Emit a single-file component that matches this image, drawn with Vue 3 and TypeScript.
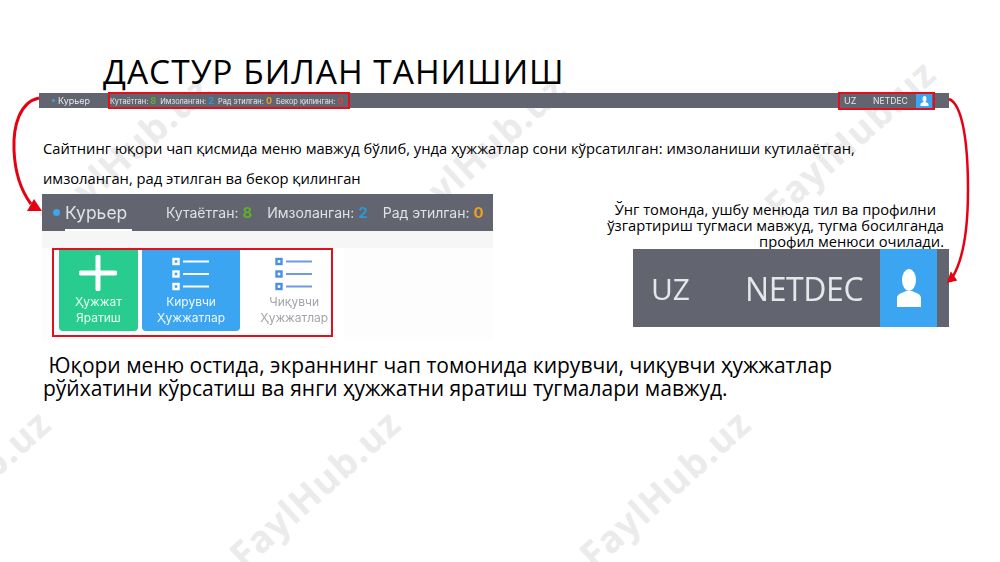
<script setup lang="ts">
interface Mark { x: number; y: number }
const marks: Mark[] = [
  { x: 45, y: 205 }, { x: 400, y: 205 }, { x: 770, y: 190 },
  { x: -115, y: 540 }, { x: 235, y: 540 }, { x: 585, y: 540 },
]
const stats = [
  { label: 'Кутаётган:', value: '8', cls: 'green' },
  { label: 'Имзоланган:', value: '2', cls: 'blue' },
  { label: 'Рад этилган:', value: '0', cls: 'orange' },
  { label: 'Бекор қилинган:', value: '0', cls: 'red' },
]
const bigStats = stats.slice(0, 3)
const rows = [0, 1, 2]
const noteLines = [
  { text: 'Ўнг томонда, ушбу менюда тил ва профилни', pad: true },
  { text: 'ўзгартириш тугмаси мавжуд, тугма босилганда', pad: false },
  { text: 'профил менюси очилади.', pad: false },
]
const outroFirst = '\u00a0Юқори меню остида, экраннинг чап томонида кирувчи, чиқувчи ҳужжатлар'
const outroSecond = 'рўйхатини кўрсатиш ва янги ҳужжатни яратиш тугмалари мавжуд.'
</script>

<template>
  <div class="slide">
    <div
      v-for="(m, i) in marks"
      :key="i"
      class="mark"
      :style="{ left: m.x + 'px', top: m.y + 'px' }"
    >FaylHub.uz</div>

    <h1 class="title">ДАСТУР БИЛАН ТАНИШИШ</h1>

    <div class="topbar">
      <span class="brand"><i class="dot"></i>Курьер</span>
      <div class="stats">
        <span v-for="s in stats" :key="s.label" class="stat">{{ s.label }} <b :class="s.cls">{{ s.value }}</b></span>
      </div>
      <div class="side">
        <span class="uz">UZ</span>
        <span class="net">NETDEC</span>
        <span class="avatar">
          <svg width="9" height="10" viewBox="0 0 18 20"><ellipse cx="9" cy="6" rx="4" ry="6" fill="#fff"/><path d="M1 20v-3c0-3 3-4 6-5h4c3 1 6 2 6 5v3z" fill="#fff"/></svg>
        </span>
      </div>
    </div>

    <p class="intro">Сайтнинг юқори чап қисмида меню мавжуд бўлиб, унда ҳужжатлар сони кўрсатилган: имзоланиши кутилаётган,<br>имзоланган, рад этилган ва бекор қилинган</p>

    <div class="row">
      <div class="shot">
        <div class="shot-bar">
          <span class="shot-brand"><i class="shot-dot"></i><span class="shot-name">Курьер</span></span>
          <span v-for="s in bigStats" :key="s.label" class="shot-stat">{{ s.label }} <b :class="s.cls">{{ s.value }}</b></span>
        </div>
        <div class="shot-band"></div>
        <div class="shot-body">
          <div class="tiles">
            <div class="tile tile-green">
              <svg class="plus" width="38" height="36" viewBox="0 0 38 36"><path d="M19 2v32M2 18h34" stroke="#fff" stroke-width="5" stroke-linecap="round"/></svg>
              <span>Ҳужжат<br>Яратиш</span>
            </div>
            <div class="tile tile-blue">
              <svg class="list" width="38" height="36" viewBox="0 0 38 36">
                <g v-for="r in rows" :key="r">
                  <rect x="1.5" :y="4 + r * 12.5" width="5" height="5" fill="none" stroke="#fff" stroke-width="2.4"/>
                  <path :d="`M11 ${6.5 + r * 12.5}h26`" stroke="#fff" stroke-width="2"/>
                </g>
              </svg>
              <span>Кирувчи<br>Ҳужжатлар</span>
            </div>
            <div class="tile tile-white">
              <svg class="list" width="38" height="36" viewBox="0 0 38 36">
                <g v-for="r in rows" :key="r">
                  <rect x="1.5" :y="4 + r * 12.5" width="5" height="5" fill="none" stroke="#4a90e2" stroke-width="2.4"/>
                  <path :d="`M11 ${6.5 + r * 12.5}h26`" stroke="#6f9be0" stroke-width="2"/>
                </g>
              </svg>
              <span>Чиқувчи<br>Ҳужжатлар</span>
            </div>
          </div>
        </div>
        <div class="frame frame-tiles"></div>
      </div>

      <div class="right">
        <div class="note">
          <div v-for="l in noteLines" :key="l.text" :class="{ pad: l.pad }">{{ l.text }}</div>
        </div>
        <div class="zoom">
          <span class="z-uz">UZ</span>
          <span class="z-net">NETDEC</span>
          <span class="z-avatar">
            <svg width="26" height="38" viewBox="0 0 26 38"><ellipse cx="13" cy="11" rx="7" ry="11" fill="#fff"/><path d="M1 38v-9c0-4 5-5 9-7h6c4 2 9 3 9 7v9z" fill="#fff"/></svg>
          </span>
        </div>
      </div>
    </div>

    <div class="outro">
      <div>{{ outroFirst }}</div>
      <div>{{ outroSecond }}</div>
    </div>

    <div class="frame frame-stats"></div>
    <div class="frame frame-side"></div>

    <svg class="arrows" width="1000" height="562" viewBox="0 0 1000 562">
      <path d="M39 98C20 102 13 125 14 150C15 175 22 192 31 204" fill="none" stroke="#e60012" stroke-width="3"/>
      <path d="M42 211L27 211L34 199Z" fill="#e60012"/>
      <path d="M949 99C962 104 968 140 968 190C968 235 962 262 952 278" fill="none" stroke="#e60012" stroke-width="2.5"/>
      <path d="M948 282L951 273L956 280Z" fill="#e60012" stroke="#e60012" stroke-width="1.5"/>
    </svg>
  </div>
</template>

<style>
html, body { margin: 0; background: #fff; }
</style>

<style scoped>
.slide {
  position: relative;
  width: 1000px;
  height: 562px;
  overflow: hidden;
  background: #fff;
  color: #000;
  font-family: "Open Sans", "Noto Sans", sans-serif;
}
.mark {
  position: absolute;
  width: 240px;
  line-height: 40px;
  transform: rotate(-42deg);
  transform-origin: 0 50%;
  color: #ebebeb;
  font-size: 37px;
  font-weight: 700;
  letter-spacing: 1px;
  white-space: nowrap;
}
.title {
  position: relative;
  margin: 0 0 0 103px;
  padding-top: 50px;
  height: 43px;
  font-size: 33.5px;
  font-weight: 400;
  line-height: 43px;
  letter-spacing: 1px;
  white-space: nowrap;
}
.topbar {
  position: relative;
  display: flex;
  align-items: center;
  width: 910px;
  height: 15px;
  margin-left: 39px;
  background: #62656f;
  color: #e8e9ec;
  font-family: Inter, "Noto Sans", sans-serif;
  font-size: 7.4px;
  white-space: nowrap;
  filter: blur(0.25px);
}
.brand { display: flex; align-items: center; margin-left: 13px; width: 58px; font-size: 9px; }
.dot { width: 3px; height: 3px; border-radius: 50%; background: #3fa3ef; margin-right: 3px; }
.stats { display: flex; gap: 4px; }
.stat b { font-weight: 700; font-size: 9px; }
.green { color: #5fae2e; }
.blue { color: #2f96d8; }
.orange { color: #eda21e; }
.red { color: #d3453c; }
.side { display: flex; align-items: center; margin-left: auto; margin-right: 17px; height: 15px; }
.uz { width: 29px; font-size: 9px; }
.net { width: 43px; font-size: 8.6px; }
.avatar { display: flex; align-items: center; justify-content: center; width: 16px; height: 15px; background: #3ba5f2; }
.intro {
  position: relative;
  margin: 25px 0 0 43px;
  font-size: 14.73px;
  line-height: 30px;
  white-space: nowrap;
}
.row { position: relative; display: flex; align-items: flex-start; margin-top: 1px; margin-left: 42px; }
.shot { position: relative; flex: none; width: 451px; height: 147px; background: #fff; }
.shot-bar {
  display: flex;
  align-items: center;
  height: 37px;
  overflow: hidden;
  background: #62656f;
  color: #dfe1e6;
  font-family: Inter, "Noto Sans", sans-serif;
  font-size: 14px;
  white-space: nowrap;
  filter: blur(0.3px);
}
.shot-brand { display: flex; flex: none; align-items: center; width: 124px; height: 37px; }
.shot-dot { width: 7px; height: 7px; margin: 0 5px 0 11px; border-radius: 50%; background: #3fa3ef; }
.shot-name { position: relative; padding-right: 5px; font-size: 17.5px; line-height: 37px; }
.shot-name::after { content: ""; position: absolute; left: 0; right: 0; bottom: 0; height: 2px; background: #fff; }
.shot-stat { flex: none; margin-right: 15px; }
.shot-stat b { font-weight: 700; font-size: 15px; }
.shot-band { height: 17px; background: #f6f6f7; }
.shot-body { display: flex; height: 93px; background: #fdfdfd; }
.tiles { display: flex; gap: 4px; margin-left: 17px; width: 285px; background: #fff; }
.tile {
  display: flex;
  flex-direction: column;
  align-items: center;
  height: 83px;
  border-radius: 0 0 4px 4px;
  font-family: Inter, "Noto Sans", sans-serif;
  font-size: 12px;
  line-height: 16px;
  text-align: center;
  filter: blur(0.25px);
}
.tile span { display: block; }
.tile-green { width: 79px; background: #29cc8f; color: #e8fff5; }
.tile-blue { width: 99px; background: #3ba5f2; color: #eef8ff; }
.tile-white { width: 100px; color: #a3a5ab; background: #fff; }
.plus, .list { margin: 7px 0 3px; }
.frame { position: absolute; border: 2px solid #e0101c; box-sizing: border-box; }
.frame-tiles { left: 10px; top: 54px; width: 281px; height: 89px; }
.frame-stats { left: 108px; top: 92px; width: 242px; height: 17px; }
.frame-side { left: 838px; top: 92px; width: 97px; height: 18px; }
.right { display: flex; flex: none; flex-direction: column; align-items: flex-end; width: 343px; margin-left: 113px; }
.note {
  margin: 7px 5px 0 0;
  font-size: 14.7px;
  line-height: 16px;
  text-align: right;
  white-space: nowrap;
}
.pad { padding-right: 8px; }
.zoom {
  display: flex;
  align-items: center;
  width: 316px;
  height: 78px;
  background: #62656f;
  color: #e6e7ea;
  font-size: 32px;
  font-weight: 400;
  filter: blur(0.3px);
}
.z-uz { width: 94px; margin-left: 18px; font-size: 30px; }
.z-net { width: 135px; letter-spacing: -0.4px; }
.z-avatar { display: flex; align-items: center; justify-content: center; width: 57px; height: 78px; background: #3ba5f2; }
.outro {
  position: relative;
  margin: 13px 0 0 43px;
  font-size: 21px;
  line-height: 23px;
  white-space: nowrap;
}
.arrows { position: absolute; left: 0; top: 0; pointer-events: none; }
</style>
